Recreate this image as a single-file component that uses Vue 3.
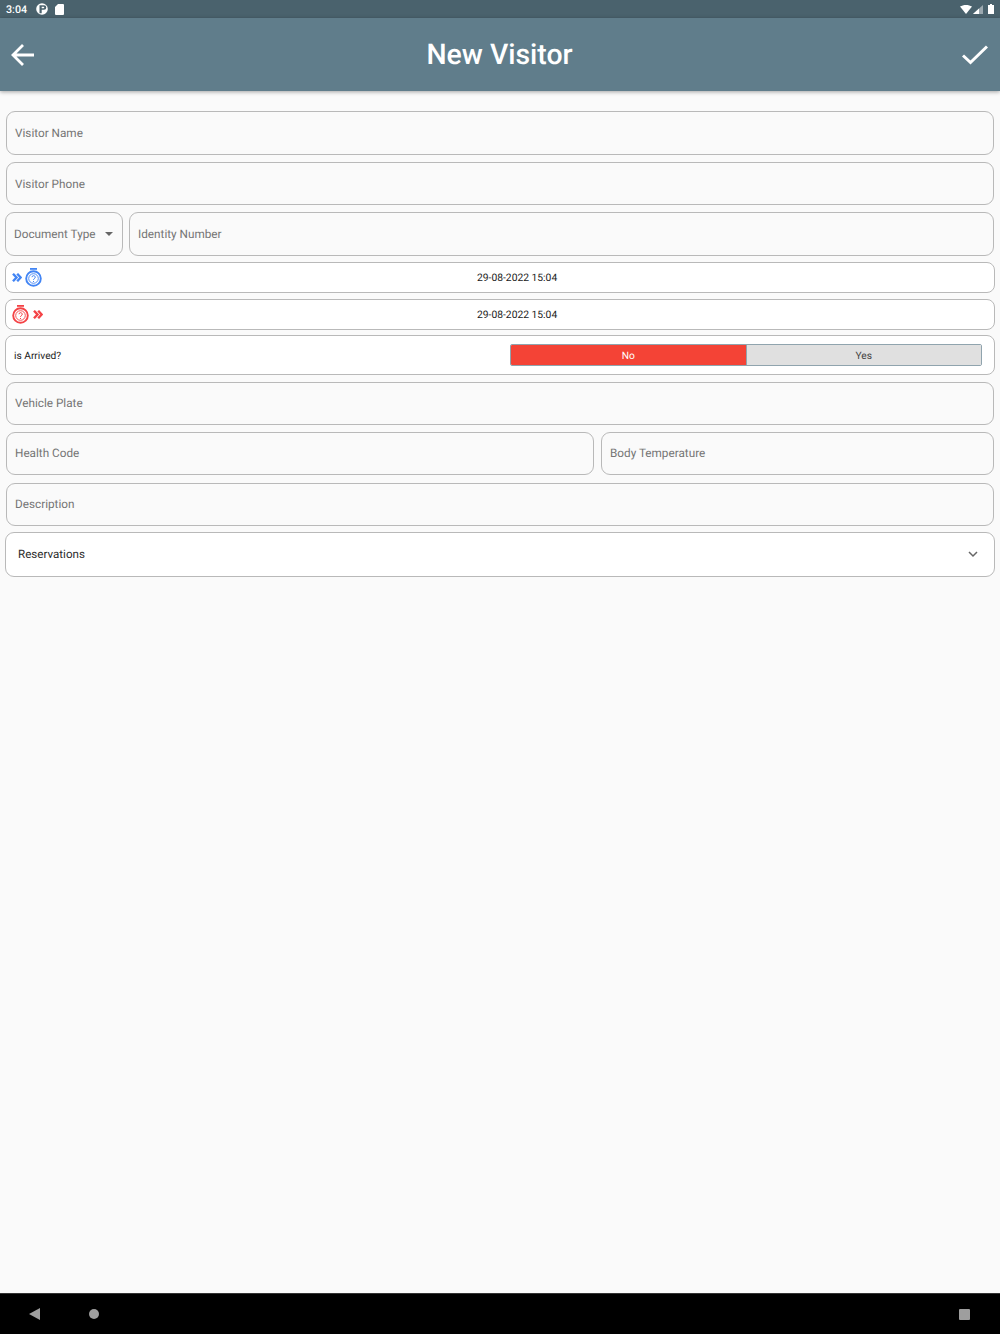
<script setup>
const NAME = 'Visitor Name'
</script>

<template>
  <div class="screen">
    <div class="status">
      <span class="time">3:04</span>
      <svg class="st-p" width="12" height="12" viewBox="0 0 12 12"><circle cx="6" cy="6" r="5.800" fill="#fff"/><path d="M3.500 2.200H8a2.300 2.300 0 0 1 0 4.600H5.700v3.400H3.500z" fill="#4a626d"/><path d="M5.700 3.800h1.800a.7.7 0 0 1 0 1.500H5.700z" fill="#fff"/></svg>
      <svg class="st-sd" width="9" height="11" viewBox="0 0 9 11"><path d="M3 0h5a1 1 0 0 1 1 1v9a1 1 0 0 1-1 1H1a1 1 0 0 1-1-1V3z" fill="#fff"/></svg>
      <span class="grow"></span>
      <svg width="12" height="9" viewBox="0 0 12 9"><path d="M0 1.600C3.400-.5 8.600-.5 12 1.600L6 9z" fill="#fff"/></svg>
      <svg class="st-sig" width="10" height="9" viewBox="0 0 10 9"><path d="M10 0v9H0z" fill="#fff" opacity=".45"/><path d="M6 3.600V9H0z" fill="#fff"/></svg>
      <svg class="st-bat" width="6" height="10" viewBox="0 0 6 10"><path d="M2 0h2v1h2v9H0V1h2z" fill="#fff"/></svg>
    </div>
    <header class="appbar">
      <svg width="24" height="24" viewBox="0 0 24 24" fill="none" stroke="#fff" stroke-width="2.800"><path d="M23 12H3M12 2 2 12l10 10"/></svg>
      <h1>New Visitor</h1>
      <svg width="26" height="20" viewBox="0 0 26 20" fill="none" stroke="#fff" stroke-width="3"><path d="M1 10.500l7.500 7L25 1.500"/></svg>
    </header>

    <main class="form">
      <div class="field r1">{{ NAME }}</div>
      <div class="field r2">Visitor Phone</div>
      <div class="row r3">
        <div class="doc"><span>Document Type</span><i class="caret"></i></div>
        <div class="field grow">Identity Number</div>
      </div>
      <div class="date r4">
        <span class="icons blue">
          <svg class="chev" width="10" height="9" viewBox="0 0 10 9" fill="none" stroke="currentColor" stroke-width="2.400"><path d="M1 .8 4.500 4.500 1 8.200M5.200 .8l3.500 3.700-3.500 3.700"/></svg>
          <svg class="watch" width="17" height="19" viewBox="0 0 17 19" fill="none" stroke="currentColor"><path d="M5 .9h7" stroke-width="1.800"/><circle cx="8.500" cy="10.500" r="7.300" stroke-width="1.900"/><circle cx="8.500" cy="10.500" r="4.800" stroke-width=".9"/><path d="M7 9.200a1.600 1.600 0 1 1 2.300 1.500c-.6.300-.8.700-.8 1.300M8.500 13v1" stroke-width="1"/></svg>
        </span>
        <span class="when">29-08-2022 15:04</span>
      </div>
      <div class="date r5">
        <span class="icons red">
          <svg class="watch" width="17" height="19" viewBox="0 0 17 19" fill="none" stroke="currentColor"><path d="M5 .9h7" stroke-width="1.800"/><circle cx="8.500" cy="10.500" r="7.300" stroke-width="1.900"/><circle cx="8.500" cy="10.500" r="4.800" stroke-width=".9"/><path d="M7 9.200a1.600 1.600 0 1 1 2.300 1.500c-.6.300-.8.700-.8 1.300M8.500 13v1" stroke-width="1"/></svg>
          <svg class="chev" width="10" height="9" viewBox="0 0 10 9" fill="none" stroke="currentColor" stroke-width="2.400"><path d="M1 .8 4.500 4.500 1 8.200M5.200 .8l3.500 3.700-3.500 3.700"/></svg>
        </span>
        <span class="when">29-08-2022 15:04</span>
      </div>
      <div class="arrived r6">
        <span class="q">is Arrived?</span>
        <div class="seg">
          <span class="no">No</span>
          <span class="yes">Yes</span>
        </div>
      </div>
      <div class="field short r7">Vehicle Plate</div>
      <div class="row r8">
        <div class="field short health">Health Code</div>
        <div class="field short grow">Body Temperature</div>
      </div>
      <div class="field short r9">Description</div>
      <div class="res r10">
        <span>Reservations</span>
        <svg width="10" height="7" viewBox="0 0 10 7" fill="none" stroke="#666" stroke-width="1.500"><path d="M1 1l4 4 4-4"/></svg>
      </div>
    </main>

    <footer class="nav">
      <svg class="back" width="11" height="12" viewBox="0 0 11 12"><path d="M11 0v12L0 6z" fill="#9e9e9e"/></svg>
      <span class="home"></span>
      <span class="grow"></span>
      <span class="recent"></span>
    </footer>
  </div>
</template>

<style>
html, body { margin: 0; background: #fafafa; }
</style>

<style scoped>
.screen {
  width: 1000px;
  height: 1334px;
  display: flex;
  flex-direction: column;
  background: #fafafa;
  font-family: Roboto, "Liberation Sans", sans-serif;
  text-rendering: geometricPrecision;
  overflow: hidden;
}
.grow { flex: 1; min-width: 0; }
.status {
  height: 18px;
  flex: none;
  background: #4a626d;
  display: flex;
  align-items: center;
  padding: 0 6px 0 6px;
  color: #fff;
  font-size: 10.700px;
  font-weight: 500;
  gap: 1px;
}
.st-p { margin-left: 8px; }
.st-sd { margin-left: 6px; }
.st-sig { margin-left: 0; }
.st-bat { margin-left: 4px; }
.appbar {
  height: 73px;
  flex: none;
  background: #607d8b;
  box-shadow: 0 1px 4px rgba(0,0,0,.35);
  display: flex;
  align-items: center;
  justify-content: space-between;
  padding: 0 12px 0 11px;
  position: relative;
  z-index: 1;
}
.appbar h1 {
  margin: 0 0 0 2px;
  color: #fff;
  font-size: 28.400px;
  font-weight: 500;
}
.form {
  flex: 1;
  padding: 20px 5px 0 5px;
  display: flex;
  flex-direction: column;
  font-size: 11.750px;
  color: #757575;
}
.field {
  box-sizing: border-box;
  height: 44px;
  margin: 0 1px;
  border: 1px solid #b9b9b9;
  border-radius: 9px;
  display: flex;
  align-items: center;
  padding: 0 8px 1px;
  background: #fafafa;
}
.field.short { height: 43px; }
.row { display: flex; gap: 6px; }
.row .field { margin: 0; }
.r2 { margin-top: 7px; height: 43px; padding-bottom: 0; }
.r3 { margin-top: 7px; padding-right: 1px; }
.doc {
  box-sizing: border-box;
  width: 118px;
  height: 44px;
  border: 1px solid #b9b9b9;
  border-radius: 9px;
  display: flex;
  align-items: center;
  justify-content: space-between;
  padding: 0 9px 1px 8px;
}
.caret {
  width: 0;
  height: 0;
  border: 4px solid transparent;
  border-top: 4px solid #666;
  border-bottom: 0;
}
.date {
  box-sizing: border-box;
  height: 31px;
  border: 1px solid #b9b9b9;
  border-radius: 8px;
  background: #fff;
  display: flex;
  align-items: center;
  padding: 0 6px;
  position: relative;
}
.icons { display: flex; align-items: center; gap: 3px; }
.blue { color: #4285f4; }
.red { color: #f44346; }
.red .chev { margin-left: 1px; }
.when {
  position: absolute;
  left: 471px;
  color: #212121;
  font-size: 10.300px;
}
.r4 { margin-top: 6px; }
.r5 { margin-top: 6px; }
.arrived {
  box-sizing: border-box;
  height: 40px;
  margin-top: 5px;
  border: 1px solid #b9b9b9;
  border-radius: 8px;
  background: #fff;
  display: flex;
  align-items: center;
  justify-content: space-between;
  padding: 0 12px 0 8px;
  color: #212121;
  font-size: 10.200px;
}
.q { padding-top: 2px; }
.seg {
  box-sizing: border-box;
  width: 472px;
  height: 22px;
  display: flex;
  border: 1px solid #90a4ae;
  border-radius: 2px;
  overflow: hidden;
}
.seg span {
  flex: 1;
  display: flex;
  align-items: center;
  justify-content: center;
  padding-top: 2px;
}
.no { background: #f44336; color: #fff; border-right: 1px solid #90a4ae; }
.yes { background: #e0e0e0; color: #424242; }
.r7 { margin-top: 7px; }
.r8 { margin: 7px 1px 0; gap: 7px; }
.health { width: 588px; flex: none; }
.r9 { margin-top: 8px; }
.res {
  box-sizing: border-box;
  height: 45px;
  margin-top: 6px;
  border: 1px solid #b9b9b9;
  border-radius: 9px;
  background: #fff;
  display: flex;
  align-items: center;
  justify-content: space-between;
  padding: 0 16px 1px 12px;
  color: #2b2b2b;
  font-size: 11.600px;
}
.nav {
  height: 41px;
  flex: none;
  background: #000;
  border-top: 1px solid #333;
  box-sizing: border-box;
  display: flex;
  align-items: center;
  padding: 0 30px 0 29px;
}
.home {
  width: 10px;
  height: 10px;
  margin-left: 49px;
  border-radius: 50%;
  background: #9e9e9e;
}
.recent {
  width: 11px;
  height: 11px;
  background: #9e9e9e;
  border-radius: 1px;
}
</style>
